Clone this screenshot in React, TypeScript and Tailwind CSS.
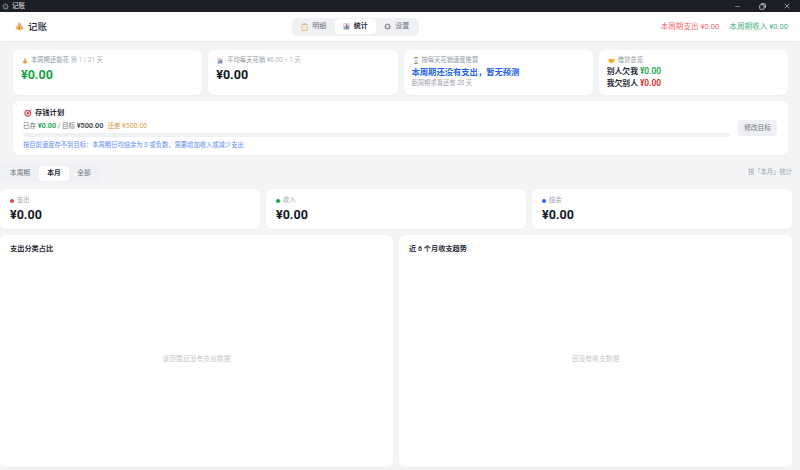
import { Minus, X } from 'lucide-react';

const font = "font-['Roboto','Noto_Sans_CJK_SC',sans-serif]";

function MoneyBag({ size = 11 }: { size?: number }) {
  return (
    <svg width={size} height={size} viewBox="0 0 16 16" className="shrink-0">
      <path d="M5.5 1.5 L10.5 1.5 L9.3 4.6 L6.7 4.6 Z" fill="#e0a458" />
      <path d="M6.5 4.6 C3.5 6.5 1.6 9 1.6 11.3 C1.6 14 4.2 15 8 15 C11.8 15 14.4 14 14.4 11.3 C14.4 9 12.5 6.5 9.5 4.6 Z" fill="#f2b563" />
      <rect x="6.2" y="4.1" width="3.6" height="1" fill="#a8743a" />
      <rect x="7.2" y="8" width="1.6" height="4.6" rx="0.4" fill="#a8743a" />
    </svg>
  );
}

function BarChart({ size = 7 }: { size?: number }) {
  return (
    <svg width={size} height={size} viewBox="0 0 16 16" className="shrink-0">
      <rect x="1" y="1" width="14" height="14" rx="1" fill="#e8eaee" stroke="#9aa3ad" strokeWidth="0.8" />
      <rect x="3" y="8" width="3" height="6" fill="#22b573" />
      <rect x="6.6" y="3" width="3" height="11" fill="#e5398b" />
      <rect x="10.2" y="6" width="3" height="8" fill="#2b8fd9" />
    </svg>
  );
}

function Clipboard() {
  return (
    <svg width="7" height="8" viewBox="0 0 14 16" className="shrink-0">
      <rect x="1" y="2" width="12" height="13.5" rx="1.5" fill="#e3a868" />
      <rect x="2.6" y="3.6" width="8.8" height="10.4" fill="#fbf6ee" />
      <rect x="4.5" y="0.6" width="5" height="3" rx="0.8" fill="#a9b0b8" />
      <rect x="4" y="6.5" width="6" height="1" fill="#c9ced4" />
      <rect x="4" y="9.5" width="6" height="1" fill="#c9ced4" />
    </svg>
  );
}

function Gear({ fill = '#8b8d9b', size = 7 }: { fill?: string; size?: number }) {
  return (
    <svg width={size} height={size} viewBox="0 0 16 16" className="shrink-0">
      <circle cx="8" cy="8" r="4.6" fill="none" stroke={fill} strokeWidth="2.6" />
      <g stroke={fill} strokeWidth="2.4">
        <path d="M8 0.8V3.2M8 12.8V15.2M0.8 8H3.2M12.8 8H15.2M2.9 2.9L4.6 4.6M11.4 11.4L13.1 13.1M13.1 2.9L11.4 4.6M4.6 11.4L2.9 13.1" />
      </g>
    </svg>
  );
}

function Hourglass() {
  return (
    <svg width="6" height="7" viewBox="0 0 14 16" className="shrink-0">
      <rect x="2" y="0.5" width="10" height="2" fill="#8a6d3b" />
      <rect x="2" y="13.5" width="10" height="2" fill="#8a6d3b" />
      <path d="M3.4 2.5H10.6C10.6 5.5 8.4 7 8 8C8.4 9 10.6 10.5 10.6 13.5H3.4C3.4 10.5 5.6 9 6 8C5.6 7 3.4 5.5 3.4 2.5Z" fill="#b9dcef" />
      <path d="M4.4 13.5C4.6 11.5 6 10.6 7 9.6C8 10.6 9.4 11.5 9.6 13.5Z" fill="#f0b53e" />
    </svg>
  );
}

function Handshake() {
  return (
    <svg width="7" height="6" viewBox="0 0 16 12" className="shrink-0">
      <path d="M0.5 2.5L4.5 0.8L8 2L11.5 0.8L15.5 2.5L14.8 6.5L8.5 11.5Q8 11.9 7.5 11.5L1.2 6.5Z" fill="#f5b31f" />
      <path d="M5.2 5.2L8 3.2L11.5 6.2" fill="none" stroke="#d08a0f" strokeWidth="1" />
    </svg>
  );
}

function Target() {
  return (
    <svg width="8" height="8" viewBox="0 0 16 16" className="shrink-0">
      <circle cx="7.5" cy="8.5" r="6.8" fill="#e2504c" />
      <circle cx="7.5" cy="8.5" r="4.5" fill="#f6e6e4" />
      <circle cx="7.5" cy="8.5" r="2.4" fill="#e2504c" />
      <path d="M7.5 8.5L14 2" stroke="#4f7fc4" strokeWidth="1.3" />
      <path d="M12.5 1L13.2 2.8L15 3.5L15.6 1.4Z" fill="#4f9de0" />
    </svg>
  );
}

function Restore() {
  return (
    <svg width="7" height="7" viewBox="0 0 8 8" fill="none" stroke="#d1d5db" strokeWidth="1">
      <rect x="0.8" y="2" width="5" height="5.2" rx="1" />
      <path d="M2.4 0.8H6A1.3 1.3 0 0 1 7.3 2.1V5.6" />
    </svg>
  );
}

function TopCard({ children }: { children: React.ReactNode }) {
  return <div className="flex-1 min-w-0 h-[45px] rounded-[6px] bg-white px-2 pt-[5px] shadow-[0_1px_2px_rgba(0,0,0,0.03)]">{children}</div>;
}

function StatCard({ dot, label }: { dot: string; label: string }) {
  return (
    <div className="flex-1 h-[40px] rounded-[6px] bg-white pl-[10px] pt-[6px] shadow-[0_1px_2px_rgba(0,0,0,0.03)]">
      <div className="flex items-center gap-[3px] h-[11px] text-[6.3px] leading-[11px] text-[#9ca3af]">
        <span className={`w-[4px] h-[4px] rounded-full ${dot}`} />
        {label}
      </div>
      <div className="text-[12.5px] leading-[17px] font-bold text-[#111827]">¥0.00</div>
    </div>
  );
}

function ChartCard({ title, empty }: { title: string; empty: string }) {
  return (
    <div className="flex-1 flex flex-col rounded-[6px] bg-white px-[10px] pt-[8px] pb-[4px] shadow-[0_1px_2px_rgba(0,0,0,0.03)]">
      <div className="text-[7.2px] leading-[12px] font-semibold text-[#1f2937]">{title}</div>
      <div className="flex-1 flex items-center justify-center text-[6.8px] text-[#c4c7cd]">{empty}</div>
    </div>
  );
}

export default function App() {
  return (
    <div className={`${font} w-[800px] h-[470px] overflow-hidden bg-[#f3f4f6] flex flex-col`}>
      {/* title bar */}
      <div className="h-[12px] shrink-0 bg-[#1b1e25] flex items-center pl-[2px] text-white">
        <Gear fill="#737a85" size={7} />
        <span className="ml-[3px] text-[6.5px] leading-none text-[#e5e7eb]">记账</span>
        <div className="ml-auto flex items-center pr-[1px]">
          <span className="w-[25px] flex justify-center"><Minus size={7} color="#b6bac1" /></span>
          <span className="w-[24px] flex justify-center"><Restore /></span>
          <span className="w-[25px] flex justify-center"><X size={8} color="#d1d5db" /></span>
        </div>
      </div>

      {/* header */}
      <div className="h-[29px] shrink-0 bg-white flex items-center pl-[15px] pr-[12px] shadow-[0_1px_2px_rgba(0,0,0,0.04)]">
        <div className="w-[277px] flex items-center gap-[4px] text-[#1f2937]">
          <MoneyBag size={9} />
          <span className="text-[9.5px] font-medium leading-none">记账</span>
        </div>
        <div className="flex items-center h-[18px] rounded-[5px] bg-[#f0f1f5] px-[1px] text-[7px] text-[#6b7280]">
          <div className="flex items-center justify-center gap-[4px] w-[41.5px] h-[15px]"><Clipboard />明细</div>
          <div className="flex items-center justify-center gap-[4px] w-[41.5px] h-[15px] rounded-[4px] bg-white font-semibold text-[#1f2937]"><BarChart />统计</div>
          <div className="flex items-center justify-center gap-[4px] w-[41.5px] h-[15px]"><Gear />设置</div>
        </div>
        <div className="ml-auto flex items-center gap-[10px] text-[7.6px] leading-none">
          <span className="text-[#ee6b6b]">本周期支出 ¥0.00</span>
          <span className="text-[#4fb286]">本周期收入 ¥0.00</span>
        </div>
      </div>

      {/* overview */}
      <div className="pl-[13px] pt-[9px] pr-[12px] flex flex-col gap-[6px] shrink-0">
        <div className="flex gap-[6px]">
          <TopCard>
            <div className="flex items-center text-[6.3px] leading-[11px] text-[#b0b5bd]"><span className="ml-[1px] mr-[3px]"><MoneyBag size={6} /></span><span className="text-[#8f96a1]">本周期还能花</span><span className="ml-[2px]">第 1 / 21 天</span></div>
            <div className="text-[12.5px] leading-[18px] font-bold text-[#16a34a]">¥0.00</div>
          </TopCard>
          <TopCard>
            <div className="flex items-center text-[6.3px] leading-[11px] text-[#b0b5bd]"><span className="ml-[1px] mr-[4px]"><BarChart size={6} /></span><span className="text-[#8f96a1]">平均每天花销</span><span className="ml-[2px]">¥0.00 ÷ 1 天</span></div>
            <div className="text-[12.5px] leading-[18px] font-bold text-[#111827]">¥0.00</div>
          </TopCard>
          <TopCard>
            <div className="flex items-center text-[6.3px] leading-[11px] text-[#8f96a1]"><span className="ml-[1px] mr-[3px]"><Hourglass /></span><span>按每天花销速度推算</span></div>
            <div className="text-[8.3px] leading-[13px] font-semibold text-[#2563eb]">本周期还没有支出，暂无预测</div>
            <div className="text-[6.3px] leading-[8px] text-[#9ca3af]">距周期重置还有 20 天</div>
          </TopCard>
          <TopCard>
            <div className="flex items-center text-[6.3px] leading-[11px] text-[#8f96a1]"><span className="ml-[1px] mr-[3px]"><Handshake /></span><span>借贷总览</span></div>
            <div className="text-[7.8px] leading-[11.5px] font-semibold text-[#1f2937]">别人欠我 <span className="text-[8.4px] text-[#16a34a]">¥0.00</span></div>
            <div className="text-[7.8px] leading-[11.5px] font-semibold text-[#1f2937]">我欠别人 <span className="text-[8.4px] text-[#dc2626]">¥0.00</span></div>
          </TopCard>
        </div>

        <div className="h-[54px] rounded-[6px] bg-white pl-[10px] pr-[11px] flex gap-[8px] shadow-[0_1px_2px_rgba(0,0,0,0.03)]">
          <div className="flex-1 min-w-0 pt-[6px]">
            <div className="flex items-center gap-[3px] text-[7.3px] leading-[12px] font-semibold text-[#1f2937]"><span className="ml-[1px]"><Target /></span>存钱计划</div>
            <div className="mt-[1px] text-[6.5px] leading-[12px] text-[#6b7280]">
              已存 <span className="text-[7.3px] font-semibold text-[#16a34a]">¥0.00</span> / 目标 <span className="text-[7.3px] font-semibold text-[#374151]">¥500.00</span>
              <span className="ml-[4px] text-[#d9a04e]">还差 <span className="text-[7px]">¥500.00</span></span>
            </div>
            <div className="mt-[1px] h-[4px] rounded-full bg-[#eff0f3]" />
            <div className="mt-[3px] text-[6.3px] leading-[10px] text-[#5b8def]">按目前速度存不到目标：本周期日均结余为 0 或负数，需要增加收入或减少支出</div>
          </div>
          <div className="self-center h-[16px] w-[39px] rounded-[4px] bg-[#eff0f3] flex items-center justify-center text-[6.7px] text-[#6b7280]">修改目标</div>
        </div>
      </div>

      {/* range filter */}
      <div className="mt-[9px] h-[18px] shrink-0 flex items-center justify-between pr-[8px]">
        <div className="flex items-center h-[18px] rounded-[5px] bg-[#f0f1f5] pl-[1px] pr-[1px] text-[6.7px] text-[#6b7280]">
          <div className="w-[38px] text-center">本周期</div>
          <div className="w-[30px] h-[15px] leading-[15px] text-center rounded-[4px] bg-white font-semibold text-[#1f2937]">本月</div>
          <div className="w-[30px] text-center">全部</div>
        </div>
        <span className="text-[6.3px] text-[#9ca3af]">按「本月」统计</span>
      </div>

      {/* stats */}
      <div className="mt-[7px] pr-[8px] flex gap-[6px] shrink-0">
        <StatCard dot="bg-[#e5483f]" label="支出" />
        <StatCard dot="bg-[#16a34a]" label="收入" />
        <StatCard dot="bg-[#2563eb]" label="结余" />
      </div>

      {/* charts */}
      <div className="mt-[6px] mb-[3px] pr-[8px] flex-1 min-h-0 flex gap-[6px]">
        <ChartCard title="支出分类占比" empty="该范围还没有支出数据" />
        <ChartCard title="近 6 个月收支趋势" empty="还没有收支数据" />
      </div>
    </div>
  );
}
